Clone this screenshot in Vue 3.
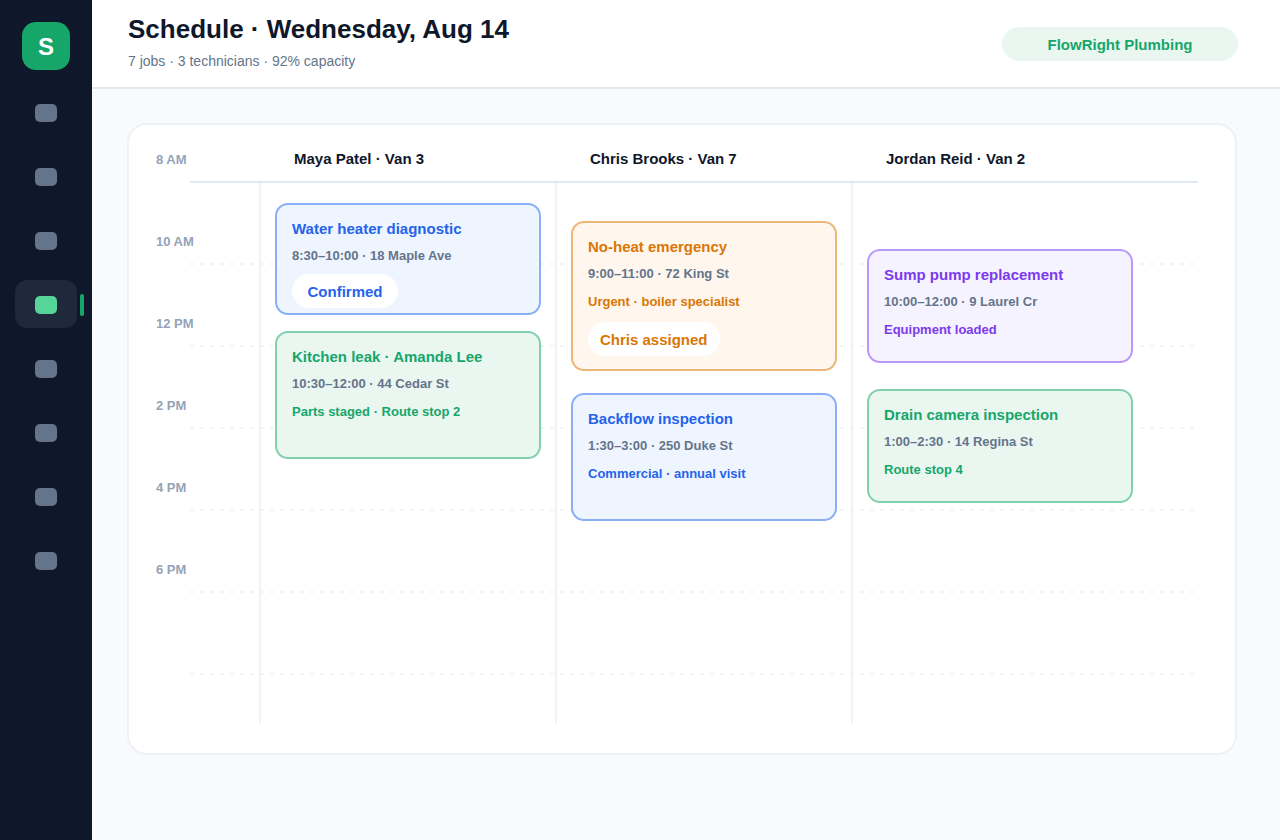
<template>
  <div class="app-shell">
    <aside class="sidebar">
      <a href="#" class="logo">S</a>
      <nav class="nav">
        <a
          v-for="(item, index) in navItems"
          :key="item"
          href="#"
          class="nav-item"
          :class="{ active: index === activeNav }"
          :aria-label="item"
          @click.prevent="activeNav = index"
        >
          <span class="nav-icon"></span>
        </a>
      </nav>
    </aside>

    <div class="content">
      <header class="topbar">
        <div>
          <h1 class="title">Schedule · Wednesday, Aug 14</h1>
          <p class="subtitle">7 jobs · 3 technicians · 92% capacity</p>
        </div>
        <div class="company">FlowRight Plumbing</div>
      </header>

      <main class="page">
        <section class="board">
          <div class="hours">
            <div v-for="(hour, index) in hours" :key="index" class="hour-row">{{ hour }}</div>
          </div>

          <div class="lanes">
            <div v-for="lane in lanes" :key="lane.name" class="lane">
              <h2 class="lane-title">{{ lane.name }}</h2>
              <div class="lane-body">
                <article
                  v-for="job in lane.jobs"
                  :key="job.title"
                  class="job"
                  :class="job.color"
                  :style="{ marginTop: job.offset + 'px', minHeight: job.length + 'px' }"
                >
                  <h3 class="job-title">{{ job.title }}</h3>
                  <p class="job-meta">{{ job.meta }}</p>
                  <p v-if="job.note" class="job-note">{{ job.note }}</p>
                  <span v-if="job.tag" class="job-tag">{{ job.tag }}</span>
                </article>
              </div>
            </div>
          </div>
        </section>
      </main>
    </div>
  </div>
</template>

<script setup>
import { ref } from "vue";

const navItems = ["Dashboard", "Customers", "Jobs", "Schedule", "Invoices", "Inventory", "Reports", "Settings"];
const activeNav = ref(3);

const hours = ["8 AM", "10 AM", "12 PM", "2 PM", "4 PM", "6 PM", ""];

// offset = free space before the job, length = height of the job on the timeline
const lanes = [
  {
    name: "Maya Patel · Van 3",
    jobs: [
      { title: "Water heater diagnostic", meta: "8:30–10:00 · 18 Maple Ave", tag: "Confirmed", color: "blue", offset: 20, length: 112 },
      { title: "Kitchen leak · Amanda Lee", meta: "10:30–12:00 · 44 Cedar St", note: "Parts staged · Route stop 2", color: "green", offset: 16, length: 128 },
    ],
  },
  {
    name: "Chris Brooks · Van 7",
    jobs: [
      { title: "No-heat emergency", meta: "9:00–11:00 · 72 King St", note: "Urgent · boiler specialist", tag: "Chris assigned", color: "orange", offset: 38, length: 150 },
      { title: "Backflow inspection", meta: "1:30–3:00 · 250 Duke St", note: "Commercial · annual visit", color: "blue", offset: 22, length: 128 },
    ],
  },
  {
    name: "Jordan Reid · Van 2",
    jobs: [
      { title: "Sump pump replacement", meta: "10:00–12:00 · 9 Laurel Cr", note: "Equipment loaded", color: "purple", offset: 66, length: 114 },
      { title: "Drain camera inspection", meta: "1:00–2:30 · 14 Regina St", note: "Route stop 4", color: "green", offset: 26, length: 114 },
    ],
  },
];
</script>

<style>
body {
  margin: 0;
  background-color: #f8fafc;
}
</style>

<style scoped>
.app-shell {
  display: flex;
  min-height: 100vh;
  font-family: "Liberation Sans", Arial, Helvetica, sans-serif;
  color: #0f172a;
}
h1,
h2,
h3,
p {
  margin: 0;
}

/* sidebar */
.sidebar {
  width: 92px;
  flex-shrink: 0;
  box-sizing: border-box;
  padding-top: 22px;
  background-color: #0f172a;
  display: flex;
  flex-direction: column;
  align-items: center;
  gap: 18px;
}
.logo {
  width: 48px;
  height: 48px;
  border-radius: 14px;
  background-color: #16a66a;
  color: #fff;
  font-size: 24px;
  font-weight: bold;
  line-height: 50px;
  text-align: center;
  text-decoration: none;
}
.nav {
  display: flex;
  flex-direction: column;
  gap: 16px;
}
.nav-item {
  position: relative;
  width: 62px;
  height: 48px;
  box-sizing: border-box;
  padding-top: 16px;
  border-radius: 12px;
  display: flex;
  justify-content: center;
}
.nav-icon {
  width: 22px;
  height: 18px;
  border-radius: 5px;
  background-color: #64748b;
}
.nav-item.active {
  background-color: #1e293b;
}
.nav-item.active .nav-icon {
  background-color: #55d698;
}
.nav-item.active::after {
  content: "";
  position: absolute;
  top: 14px;
  right: -7px;
  width: 4px;
  height: 22px;
  border-radius: 2px;
  background-color: #16a66a;
}

/* top bar */
.content {
  flex: 1;
  min-width: 0;
}
.topbar {
  display: flex;
  align-items: center;
  justify-content: space-between;
  padding: 14px 42px 13px 36px;
  background-color: #fff;
  border-bottom: 2px solid #e2e8f0;
}
.title {
  font-size: 26px;
  line-height: 30px;
}
.subtitle {
  margin: 7px 0 3px;
  font-size: 14px;
  line-height: 20px;
  color: #64748b;
}
.company {
  min-width: 236px;
  box-sizing: border-box;
  padding: 1px 16px 0;
  border-radius: 17px;
  background-color: #eaf7f1;
  color: #16a66a;
  font-size: 15px;
  font-weight: bold;
  line-height: 33px;
  text-align: center;
}

/* board */
.page {
  padding: 34px 43px 34px 35px;
}
.board {
  display: grid;
  padding: 0 37px 29px 27px;
  border: 2px solid #eef1f6;
  border-radius: 20px;
  background-color: #fff;
}
.hours,
.lanes {
  grid-area: 1 / 1;
}
.hour-row {
  height: 82px;
  box-sizing: border-box;
  padding-bottom: 13px;
  display: flex;
  align-items: flex-end;
  font-size: 13px;
  font-weight: bold;
  line-height: 20px;
  color: #94a3b8;
  background: repeating-linear-gradient(to right, #f1f4f8 0 4px, transparent 4px 10px) right bottom / calc(100% - 34px) 2px no-repeat;
}
.hour-row:first-child {
  height: 58px;
  background-image: linear-gradient(#e2e8f0, #e2e8f0);
}
.lanes {
  display: grid;
  grid-template-columns: repeat(3, 1fr);
  padding: 0 51px 0 103px;
}
.lane {
  display: flex;
  flex-direction: column;
}
.lane-title {
  height: 58px;
  box-sizing: border-box;
  padding: 24px 0 0 35px;
  font-size: 15px;
  line-height: 20px;
}
.lane-body {
  flex: 1;
  min-height: 541px;
  box-sizing: border-box;
  padding: 0 14px;
  border-left: 2px solid #f0f2f7;
}

/* jobs */
.job {
  box-sizing: border-box;
  padding: 14px 15px 4px;
  border: 2px solid;
  border-radius: 13px;
  display: flex;
  flex-direction: column;
  align-items: flex-start;
  gap: 8px;
}
.job-title {
  font-size: 15px;
  line-height: 20px;
}
.job-meta,
.job-note {
  font-size: 13px;
  font-weight: bold;
  line-height: 20px;
}
.job .job-meta {
  margin-top: -1px;
  color: #64748b;
}
.job-tag {
  min-width: 106px;
  box-sizing: border-box;
  padding: 1px 12px 0;
  border-radius: 17px;
  background-color: #fff;
  font-size: 15px;
  font-weight: bold;
  line-height: 33px;
  text-align: center;
}
.job-note + .job-tag {
  margin-top: 2px;
}
.blue {
  color: #2563eb;
  background-color: #eff5ff;
  border-color: #8aaff6;
}
.green {
  color: #16a66a;
  background-color: #eaf7f1;
  border-color: #82d0af;
}
.orange {
  color: #d97706;
  background-color: #fff6ed;
  border-color: #ecb779;
}
.purple {
  color: #7c3aed;
  background-color: #f5f3ff;
  border-color: #b998f7;
}
</style>
